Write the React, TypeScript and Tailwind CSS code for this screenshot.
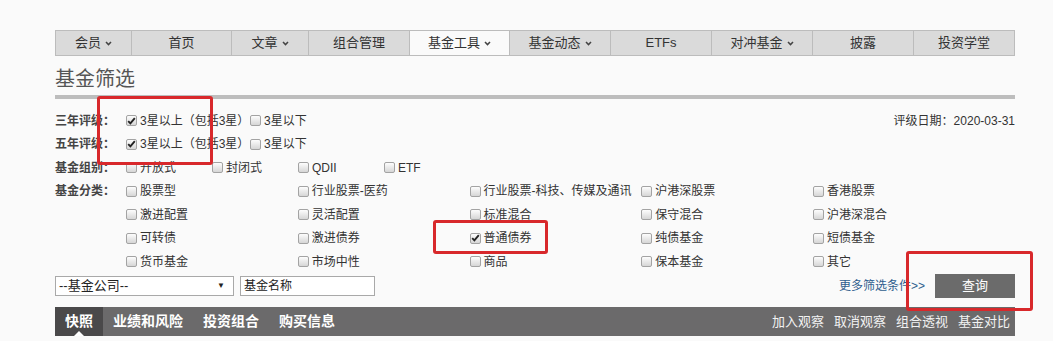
import React from "react";

const font = { fontFamily: '"Liberation Sans", "Noto Sans CJK SC", sans-serif' };

function Box({ checked = false }: { checked?: boolean }) {
  return (
    <span className="mr-[3px] inline-flex h-[11px] w-[11px] shrink-0 items-center justify-center rounded-[2px] border border-[#a3a3a3] bg-linear-to-b from-[#fdfdfd] to-[#d6d6d6]">
      {checked && (
        <svg width="9" height="8" viewBox="0 0 9 8">
          <path d="M1.2 4.2 L3.4 6.4 L7.8 1.2" stroke="#222" strokeWidth="1.9" fill="none" />
        </svg>
      )}
    </span>
  );
}

function Item({ text, checked, w }: { text: string; checked?: boolean; w?: string }) {
  return (
    <label className={`flex items-center text-[12px] text-[#333] whitespace-nowrap ${w ?? ""}`}>
      <Box checked={checked} />
      {text}
    </label>
  );
}

function Chevron() {
  return (
    <svg width="7" height="5" viewBox="0 0 7 5" className="ml-[4px]">
      <path d="M1 1 L3.5 3.6 L6 1" stroke="#444" strokeWidth="1.5" fill="none" />
    </svg>
  );
}

const tabs = [
  { label: "会员", w: "w-[76px]", drop: true },
  { label: "首页", w: "w-[100px]" },
  { label: "文章", w: "w-[77px]", drop: true },
  { label: "组合管理", w: "w-[101px]" },
  { label: "基金工具", w: "w-[100px]", drop: true, active: true },
  { label: "基金动态", w: "w-[101px]", drop: true },
  { label: "ETFs", w: "w-[101px]" },
  { label: "对冲基金", w: "w-[101px]", drop: true },
  { label: "披露", w: "w-[101px]" },
  { label: "投资学堂", w: "flex-1", last: true },
];

const categories = [
  ["股票型", "行业股票-医药", "行业股票-科技、传媒及通讯", "沪港深股票", "香港股票"],
  ["激进配置", "灵活配置", "标准混合", "保守混合", "沪港深混合"],
  ["可转债", "激进债券", "普通债券", "纯债基金", "短债基金"],
  ["货币基金", "市场中性", "商品", "保本基金", "其它"],
];

export default function App() {
  return (
    <div className="relative h-[341px] w-full overflow-hidden bg-[#fafafa] pl-[55px] pt-[30px]" style={font}>
      <div className="w-[960px]">
        {/* top nav */}
        <div className="flex h-[26px] border border-[#bcbcbc] bg-[#dadada]">
          {tabs.map((t) => (
            <div
              key={t.label}
              className={`flex items-center justify-center text-[13px] text-[#333] ${t.w} ${
                t.last ? "" : "border-r border-[#bcbcbc]"
              } ${t.active ? "bg-[#fafafa]" : ""}`}
            >
              {t.label}
              {t.drop && <Chevron />}
            </div>
          ))}
        </div>

        {/* title */}
        <h1 className="mt-[13px] text-[20px] leading-[20px] text-[#555]">基金筛选</h1>
        <div className="mt-[6px] h-[4px] bg-[#bdbdbd]" />

        {/* filters */}
        <div className="mt-[10px]">
          <div className="flex h-[23.5px] items-center">
            <span className="w-[71px] text-[12px] font-bold text-[#444]">三年评级：</span>
            <Item text="3星以上（包括3星）" checked w="w-[124px]" />
            <Item text="3星以下" />
            <span className="ml-auto text-[12px] text-[#333]">评级日期：2020-03-31</span>
          </div>
          <div className="flex h-[23.5px] items-center">
            <span className="w-[71px] text-[12px] font-bold text-[#444]">五年评级：</span>
            <Item text="3星以上（包括3星）" checked w="w-[124px]" />
            <Item text="3星以下" />
          </div>
          <div className="flex h-[23.5px] items-center">
            <span className="w-[71px] text-[12px] font-bold text-[#444]">基金组别：</span>
            <Item text="开放式" w="w-[86px]" />
            <Item text="封闭式" w="w-[86px]" />
            <Item text="QDII" w="w-[86px]" />
            <Item text="ETF" w="w-[86px]" />
          </div>
          {categories.map((row, i) => (
            <div key={i} className="flex h-[23.5px] items-center">
              <span className="w-[71px] text-[12px] font-bold text-[#444]">{i === 0 ? "基金分类：" : ""}</span>
              {row.map((c) => (
                <Item key={c} text={c} checked={c === "普通债券"} w="w-[171.75px]" />
              ))}
            </div>
          ))}

          <div className="flex h-[24px] items-center">
            <div className="flex h-[20px] w-[179px] items-center justify-between border border-[#a9a9a9] bg-white pl-[3px] pr-[8px] text-[13px] text-[#222]">
              <span>--基金公司--</span>
              <span className="text-[8px] text-[#222]">▼</span>
            </div>
            <div className="ml-[6px] flex h-[20px] w-[135px] items-center border border-[#a9a9a9] bg-white px-[3px] text-[12px] text-[#222]">
              基金名称
            </div>
            <a className="ml-auto mr-[10px] text-[12px] text-[#2f5e8e]">更多筛选条件&gt;&gt;</a>
            <button className="h-[24px] w-[80px] bg-[#6b6b6b] text-[13px] text-white">查询</button>
          </div>
        </div>

        {/* result tabs */}
        <div className="mt-[9.5px] flex h-[29px] items-stretch bg-[#6b6a6b]">
          <div className="relative flex items-center bg-[#4a494a] px-[10px] text-[14px] font-bold text-white">
            快照
            <span className="absolute bottom-0 left-1/2 h-0 w-0 -translate-x-1/2 border-x-[5px] border-b-[5px] border-x-transparent border-b-white" />
          </div>
          {["业绩和风险", "投资组合", "购买信息"].map((t) => (
            <div key={t} className="flex items-center px-[10px] text-[14px] font-bold text-white">
              {t}
            </div>
          ))}
          <div className="ml-auto flex items-center gap-[10px] pr-[5px] text-[13px] text-[#f2f2f2]">
            <span>加入观察</span>
            <span>取消观察</span>
            <span>组合透视</span>
            <span>基金对比</span>
          </div>
        </div>
      </div>

      {/* red annotation boxes */}
      <div className="absolute left-[97px] top-[96px] h-[69px] w-[116px] rounded-[3px] border-[3px] border-[#d8282b]" />
      <div className="absolute left-[433px] top-[220px] h-[34px] w-[115px] rounded-[3px] border-[3px] border-[#d8282b]" />
      <div className="absolute left-[906px] top-[251px] h-[60px] w-[127px] rounded-[3px] border-[3px] border-[#d8282b]" />
    </div>
  );
}
